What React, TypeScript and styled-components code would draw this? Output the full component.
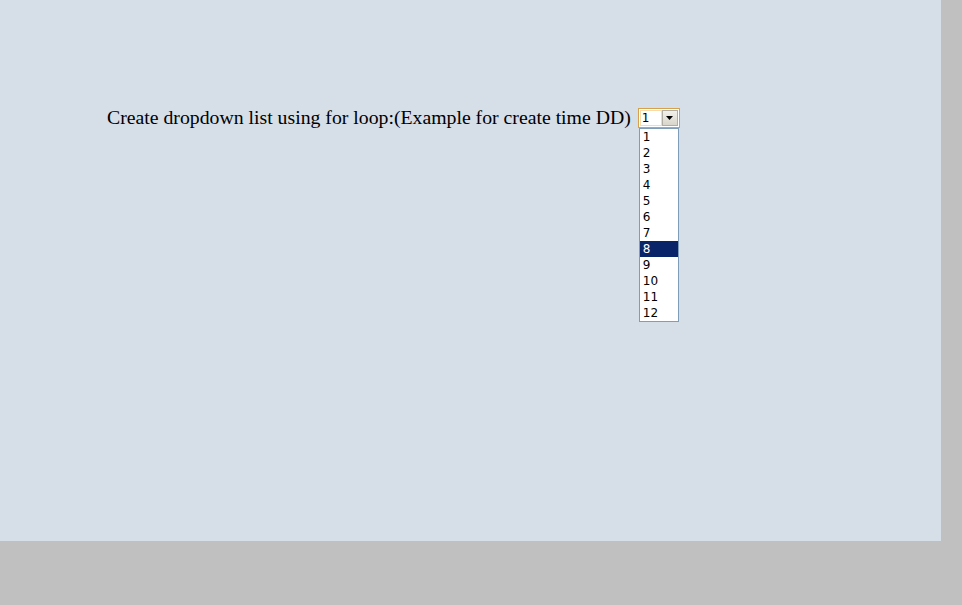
import React from 'react'
import styled, { createGlobalStyle } from 'styled-components'

const Global = createGlobalStyle`
  html, body {
    margin: 0;
    padding: 0;
    background: #c0c0c0;
  }
`

const Page = styled.div`
  width: 941px;
  height: 541px;
  background: #d6dee8;
  box-sizing: border-box;
  padding: 107px 0 0 107px;
`

const Row = styled.div`
  display: flex;
  align-items: flex-start;
  gap: 7px;
`

const Label = styled.span`
  font-family: 'Liberation Serif', 'Times New Roman', serif;
  font-size: 19.75px;
  line-height: 20px;
  color: #000;
`

const SelectWrap = styled.div`
  position: relative;
  margin-top: 1px;
`

const SelectBox = styled.div`
  display: flex;
  width: 42px;
  height: 20px;
  box-sizing: border-box;
  border: 1px solid #d7a04c;
  background: #fff;
  padding: 1px;
`

const Value = styled.span`
  flex: 1;
  font-family: Tahoma, 'DejaVu Sans', sans-serif;
  font-size: 12px;
  line-height: 16px;
  padding-left: 2px;
  color: #000;
  box-shadow: inset 0 0 0 1px #f3dcae;
`

const ArrowButton = styled.div`
  width: 16px;
  height: 16px;
  box-sizing: border-box;
  background: linear-gradient(#f2f0ea, #d8d5cc);
  border: 1px solid #b0ada4;
  display: flex;
  align-items: center;
  justify-content: center;
`

const List = styled.ul`
  position: absolute;
  top: 20px;
  left: 1px;
  width: 40px;
  margin: 0;
  padding: 0;
  list-style: none;
  background: #fff;
  border: 1px solid #7f9db9;
  box-sizing: border-box;
`

const Item = styled.li<{ $active?: boolean }>`
  height: 16px;
  line-height: 16px;
  padding-left: 3px;
  font-family: Tahoma, 'DejaVu Sans', sans-serif;
  font-size: 12px;
  background: ${p => (p.$active ? '#0a246a' : '#fff')};
  color: ${p => (p.$active ? '#fff' : '#000')};
`

const hours = Array.from({ length: 12 }, (_, i) => i + 1)

const App = () => {
  return (
    <>
      <Global />
      <Page>
        <Row>
          <Label>Create dropdown list using for loop:(Example for create time DD)</Label>
          <SelectWrap>
            <SelectBox>
              <Value>1</Value>
              <ArrowButton>
                <svg width="7" height="4" viewBox="0 0 7 4">
                  <path d="M0 0h7L3.5 4z" fill="#000" />
                </svg>
              </ArrowButton>
            </SelectBox>
            <List>
              {hours.map(h => (
                <Item key={h} $active={h === 8}>
                  {h}
                </Item>
              ))}
            </List>
          </SelectWrap>
        </Row>
      </Page>
    </>
  )
}

export default App
